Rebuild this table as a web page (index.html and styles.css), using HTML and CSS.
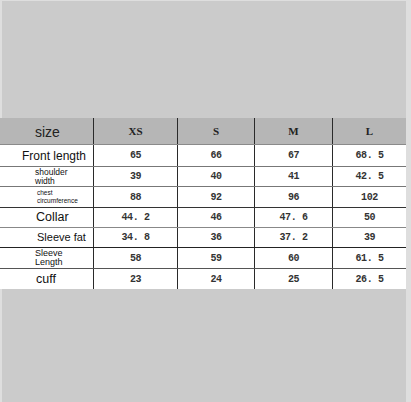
FILE: index.html
```html
<!DOCTYPE html>
<html>
<head>
<meta charset="utf-8">
<link rel="stylesheet" href="styles.css">
</head>
<body>
<div class="page">
  <div class="top"></div>
  <div class="table">
    <div class="row head">
      <div class="lab lab-size">size</div>
      <div class="c">XS</div><div class="c">S</div><div class="c">M</div><div class="c">L</div>
    </div>
    <div class="row r1">
      <div class="lab lab-front">Front length</div>
      <div class="c">65</div><div class="c">66</div><div class="c">67</div><div class="c">68. 5</div>
    </div>
    <div class="row r2">
      <div class="lab lab-two">shoulder<br>width</div>
      <div class="c">39</div><div class="c">40</div><div class="c">41</div><div class="c">42. 5</div>
    </div>
    <div class="row r3">
      <div class="lab lab-tiny">chest<br>circumference</div>
      <div class="c">88</div><div class="c">92</div><div class="c">96</div><div class="c">102</div>
    </div>
    <div class="row r4">
      <div class="lab lab-big">Collar</div>
      <div class="c">44. 2</div><div class="c">46</div><div class="c">47. 6</div><div class="c">50</div>
    </div>
    <div class="row r5">
      <div class="lab lab-mid">Sleeve fat</div>
      <div class="c">34. 8</div><div class="c">36</div><div class="c">37. 2</div><div class="c">39</div>
    </div>
    <div class="row r6">
      <div class="lab lab-sl">Sleeve<br>Length</div>
      <div class="c">58</div><div class="c">59</div><div class="c">60</div><div class="c">61. 5</div>
    </div>
    <div class="row r7">
      <div class="lab lab-big">cuff</div>
      <div class="c">23</div><div class="c">24</div><div class="c">25</div><div class="c">26. 5</div>
    </div>
  </div>
  <div class="bottom"></div>
</div>
</body>
</html>
```
FILE: styles.css
```css
html, body {
  margin: 0;
  padding: 0;
  background: #dcdcdc;
}
.page {
  width: 411px;
  height: 402px;
  display: flex;
  flex-direction: column;
  padding: 1px 5px 0 2px;
  box-sizing: border-box;
  background: #dedede;
}
.top {
  height: 117px;
  background: #cbcbcb;
}
.bottom {
  flex: 1;
  background: #cbcbcb;
}
.table {
  display: flex;
  flex-direction: column;
  background: #fff;
  margin-left: -2px;
}
.row {
  display: grid;
  grid-template-columns: 93px 84px 77px 78px 74px;
  height: 20px;
  border-bottom: 1px solid #5a5a5a;
  box-sizing: border-box;
}
.row.head {
  height: 27px;
  background: #b6b6b6;
  border-bottom: 1px solid #8a8a8a;
}
.row.r1 { height: 22px; border-bottom-color: #777; }
.row.r2 { border-bottom-color: #777; }
.row.r3 { height: 21px; border-bottom-color: #333; }
.row.r4 { border-bottom-color: #888; }
.row.r5 { border-bottom-color: #222; }
.row.r6 { height: 21px; border-bottom-color: #555; }
.row.r7 { border-bottom: none; }
.c {
  border-left: 1px solid #2a2a2a;
  display: flex;
  align-items: center;
  justify-content: center;
  font-family: "Liberation Mono", monospace;
  font-weight: bold;
  font-size: 10px;
  letter-spacing: -0.4px;
  color: #333;
}
.head .c {
  font-family: "Liberation Serif", serif;
  font-size: 11px;
  letter-spacing: 0;
  color: #222;
}
.lab {
  display: flex;
  align-items: center;
  font-family: "Liberation Sans", sans-serif;
  color: #111;
  padding-left: 35px;
  line-height: 1;
}
.lab-size { font-size: 14px; color: #222; padding-top: 1px; }
.lab-front { font-size: 12px; padding-left: 22px; }
.lab-two { font-size: 8.5px; padding-left: 35px; line-height: 9px; }
.lab-tiny { font-size: 6.5px; padding-left: 37px; line-height: 8px; }
.lab-big { font-size: 12.5px; padding-left: 36px; }
.lab-mid { font-size: 11px; padding-left: 37px; }
.lab-sl { font-size: 9px; padding-left: 35px; line-height: 9px; }
```
